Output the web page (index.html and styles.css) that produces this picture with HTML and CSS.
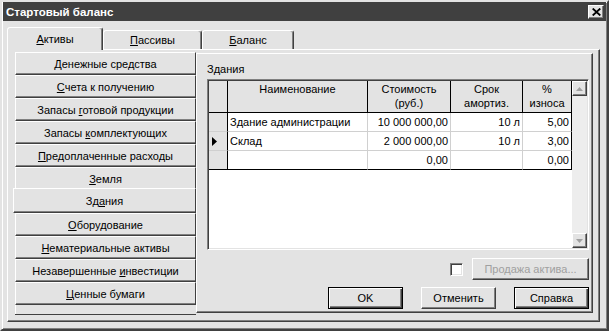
FILE: index.html
```html
<!DOCTYPE html>
<html lang="ru">
<head>
    <meta charset="UTF-8">
    <meta name="viewport" content="width=device-width, initial-scale=1.0">
    <title>Стартовый баланс</title>
    <link rel="stylesheet" href="styles.css">
</head>
<body>
    <div class="window">
        <div class="titlebar">
            <span class="title">Стартовый баланс</span>
            <span class="close-btn">
                <svg width="9" height="8" viewBox="0 0 9 8"><path d="M0.7 0.5 L8.3 7.5 M8.3 0.5 L0.7 7.5" stroke="#000" stroke-width="1.8"/></svg>
            </span>
        </div>

        <div class="tabs">
            <div class="tab tab-assets active"><span><u>А</u>ктивы</span></div>
            <div class="tab tab-liab"><span><u>П</u>ассивы</span></div>
            <div class="tab tab-balance"><span><u>Б</u>аланс</span></div>
        </div>

        <div class="tabpage">
            <div class="nav">
                <div class="nav-btn"><span><u>Д</u>енежные средства</span></div>
                <div class="nav-btn"><span><u>С</u>чета к получению</span></div>
                <div class="nav-btn"><span>Запасы <u>г</u>отовой продукции</span></div>
                <div class="nav-btn"><span>Запасы <u>к</u>омплектующих</span></div>
                <div class="nav-btn"><span><u>П</u>редоплаченные расходы</span></div>
                <div class="nav-btn"><span><u>З</u>емля</span></div>
                <div class="nav-btn selected"><span>Зд<u>а</u>ния</span></div>
                <div class="nav-btn"><span><u>О</u>борудование</span></div>
                <div class="nav-btn"><span><u>Н</u>ематериальные активы</span></div>
                <div class="nav-btn"><span>Незавершенные <u>и</u>нвестиции</span></div>
                <div class="nav-btn"><span><u>Ц</u>енные бумаги</span></div>
            </div>

            <div class="panel">
                <div class="caption">Здания</div>
                <div class="grid">
                    <table>
                        <colgroup>
                            <col style="width: 19px">
                            <col style="width: 140px">
                            <col style="width: 83px">
                            <col style="width: 72px">
                            <col style="width: 49px">
                        </colgroup>
                        <tr class="head">
                            <th class="ind"></th>
                            <th>Наименование</th>
                            <th>Стоимость<br>(руб.)</th>
                            <th>Срок<br>амортиз.</th>
                            <th class="last">%<br>износа</th>
                        </tr>
                        <tr class="row">
                            <td class="ind"></td>
                            <td>Здание администрации</td>
                            <td class="num">10 000 000,00</td>
                            <td class="num">10 л</td>
                            <td class="num last">5,00</td>
                        </tr>
                        <tr class="row">
                            <td class="ind"><svg width="5" height="9" viewBox="0 0 5 9"><polygon points="0,0 5,4.5 0,9" fill="#000"/></svg></td>
                            <td>Склад</td>
                            <td class="num">2 000 000,00</td>
                            <td class="num">10 л</td>
                            <td class="num last">3,00</td>
                        </tr>
                        <tr class="row bottom">
                            <td class="ind"></td>
                            <td></td>
                            <td class="num">0,00</td>
                            <td class="num"></td>
                            <td class="num last">0,00</td>
                        </tr>
                    </table>
                    <div class="scrollbar">
                        <div class="sb-btn">
                            <svg width="7" height="4" viewBox="0 0 7 4"><polygon points="0,4 3.5,0 7,4" fill="#a0a0a0"/></svg>
                        </div>
                        <div class="sb-track"></div>
                        <div class="sb-btn">
                            <svg width="7" height="4" viewBox="0 0 7 4"><polygon points="0,0 7,0 3.5,4" fill="#a0a0a0"/></svg>
                        </div>
                    </div>
                </div>

                <div class="sale-row">
                    <span class="checkbox"></span>
                    <button class="btn btn-sale" disabled>Продажа актива...</button>
                </div>

                <div class="actions">
                    <button class="btn default">OK</button>
                    <button class="btn">Отменить</button>
                    <button class="btn default">Справка</button>
                </div>
            </div>
        </div>
    </div>
</body>
</html>
```

FILE: styles.css
```css
/* General styles */
* {
    box-sizing: border-box;
}

body {
    margin: 0;
    font-family: "Liberation Sans", Arial, sans-serif;
    font-size: 11px;
    color: #000;
    background-color: #e3e3e3;
}

u {
    text-decoration: underline;
    text-underline-offset: 1px;
}

/* Window frame */
.window {
    width: 609px;
    height: 331px;
    display: flex;
    flex-direction: column;
    border: 2px solid;
    border-color: #e3e3e3 #404040 #404040 #e3e3e3;
    box-shadow: inset 1px 1px #fff, inset -1px -1px #808080;
    padding: 0 1px 1px 1px;
    background-color: #e3e3e3;
}

.titlebar {
    height: 19px;
    flex-shrink: 0;
    background-color: #404040;
    display: flex;
    align-items: center;
    justify-content: space-between;
    padding: 0 2px 0 3px;
}

.title {
    color: #fff;
    font-weight: bold;
    font-size: 11.5px;
}

.close-btn {
    width: 16px;
    height: 14px;
    background-color: #e3e3e3;
    border: 1px solid;
    border-color: #fff #404040 #404040 #fff;
    box-shadow: inset -1px -1px #808080;
    display: flex;
    align-items: center;
    justify-content: center;
}

/* Tabs */
.tabs {
    height: 28px;
    flex-shrink: 0;
    display: flex;
    align-items: flex-end;
    padding-left: 4px;
}

.tab {
    height: 19px;
    border: 1px solid;
    border-bottom: none;
    border-color: #fff #404040 transparent #fff;
    border-radius: 3px 3px 0 0;
    box-shadow: inset -1px 0 #808080;
    background-color: #e3e3e3;
    display: flex;
    align-items: center;
    justify-content: center;
}

.tab.active {
    height: 23px;
    margin-bottom: -1px;
    position: relative;
    z-index: 1;
}

.tab-assets { width: 96px; }
.tab-liab { width: 99px; }
.tab-balance { width: 92px; }

.tabpage {
    flex: 1;
    margin: 0 6px 6px 4px;
    border: 1px solid;
    border-color: #fff #404040 #404040 #fff;
    box-shadow: inset -1px -1px #808080;
    padding: 2px 6px 6px 7px;
    display: grid;
    grid-template-columns: 181px 397px;
}

/* Left list of sections */
.nav {
    display: flex;
    flex-direction: column;
    border-bottom: 1px solid #404040;
    box-shadow: inset 1px 0 #fff;
}

.nav-btn {
    height: 23px;
    flex-shrink: 0;
    border: 1px solid;
    border-color: #fff #404040 #404040 #fff;
    box-shadow: inset 0 -1px #808080;
    display: flex;
    align-items: center;
    justify-content: center;
    white-space: nowrap;
}

.nav-btn.selected {
    height: 25px;
    margin: -2px 0 0 -2px;
    position: relative;
    background-color: #e3e3e3;
}

/* Right panel */
.panel {
    margin: 1px 0 2px;
    border: 1px solid;
    border-color: #fff #404040 #404040 #fff;
    box-shadow: inset -1px -1px #808080;
    padding: 8px 3px 0 10px;
    display: flex;
    flex-direction: column;
}

.caption {
    line-height: 14px;
    margin-bottom: 3px;
}

.grid {
    height: 171px;
    flex-shrink: 0;
    display: flex;
    background-color: #fff;
    border: 1px solid;
    border-color: #808080 #fff #fff #808080;
    box-shadow: inset 1px 1px #404040, inset -1px -1px #e3e3e3;
    padding: 1px;
}

.grid table {
    width: 363px;
    table-layout: fixed;
    border-collapse: separate;
    border-spacing: 0;
    align-self: flex-start;
}

.grid th,
.grid td {
    padding: 0 2px;
    border-right: 1px solid #d0d0d0;
    border-bottom: 1px solid #d0d0d0;
    white-space: nowrap;
    overflow: hidden;
    font-weight: normal;
}

.grid tr.head {
    height: 32px;
}

.grid tr.row {
    height: 19px;
}

.grid th {
    background-color: #e3e3e3;
    border-color: #000;
    vertical-align: top;
    text-align: center;
    line-height: 14px;
    padding-top: 1px;
}

.grid td.ind {
    background-color: #e3e3e3;
    border-right-color: #000;
    padding: 0 0 0 3px;
    line-height: 0;
}

.grid td.num {
    text-align: right;
}

.grid .last {
    border-right-color: #000;
}

.grid tr.bottom td {
    border-bottom-color: #000;
}

.scrollbar {
    width: 15px;
    display: flex;
    flex-direction: column;
    background-color: #ededed;
}

.sb-btn {
    height: 15px;
    background-color: #e3e3e3;
    border: 1px solid;
    border-color: #fff #404040 #404040 #fff;
    box-shadow: inset -1px -1px #808080;
    display: flex;
    align-items: center;
    justify-content: center;
}

.sb-track {
    flex: 1;
}

/* Buttons */
.btn {
    height: 22px;
    padding: 0;
    font: inherit;
    color: #000;
    background-color: #e3e3e3;
    border: 1px solid;
    border-color: #fff #404040 #404040 #fff;
    box-shadow: inset -1px -1px #808080;
}

.btn.default {
    border-color: #000;
    box-shadow: inset 1px 1px #fff, inset -1px -1px #404040, inset -2px -2px #808080;
}

.sale-row {
    display: flex;
    justify-content: flex-end;
    align-items: center;
    gap: 9px;
    margin-top: 8px;
}

.checkbox {
    width: 13px;
    height: 13px;
    background-color: #fff;
    border: 1px solid;
    border-color: #808080 #fff #fff #808080;
    box-shadow: inset 1px 1px #404040, inset -1px -1px #e3e3e3;
}

.btn-sale {
    width: 117px;
    color: #a0a0a0;
}

.actions {
    display: flex;
    justify-content: flex-end;
    gap: 18px;
    margin-top: 7px;
}

.actions .btn {
    width: 75px;
}
```
